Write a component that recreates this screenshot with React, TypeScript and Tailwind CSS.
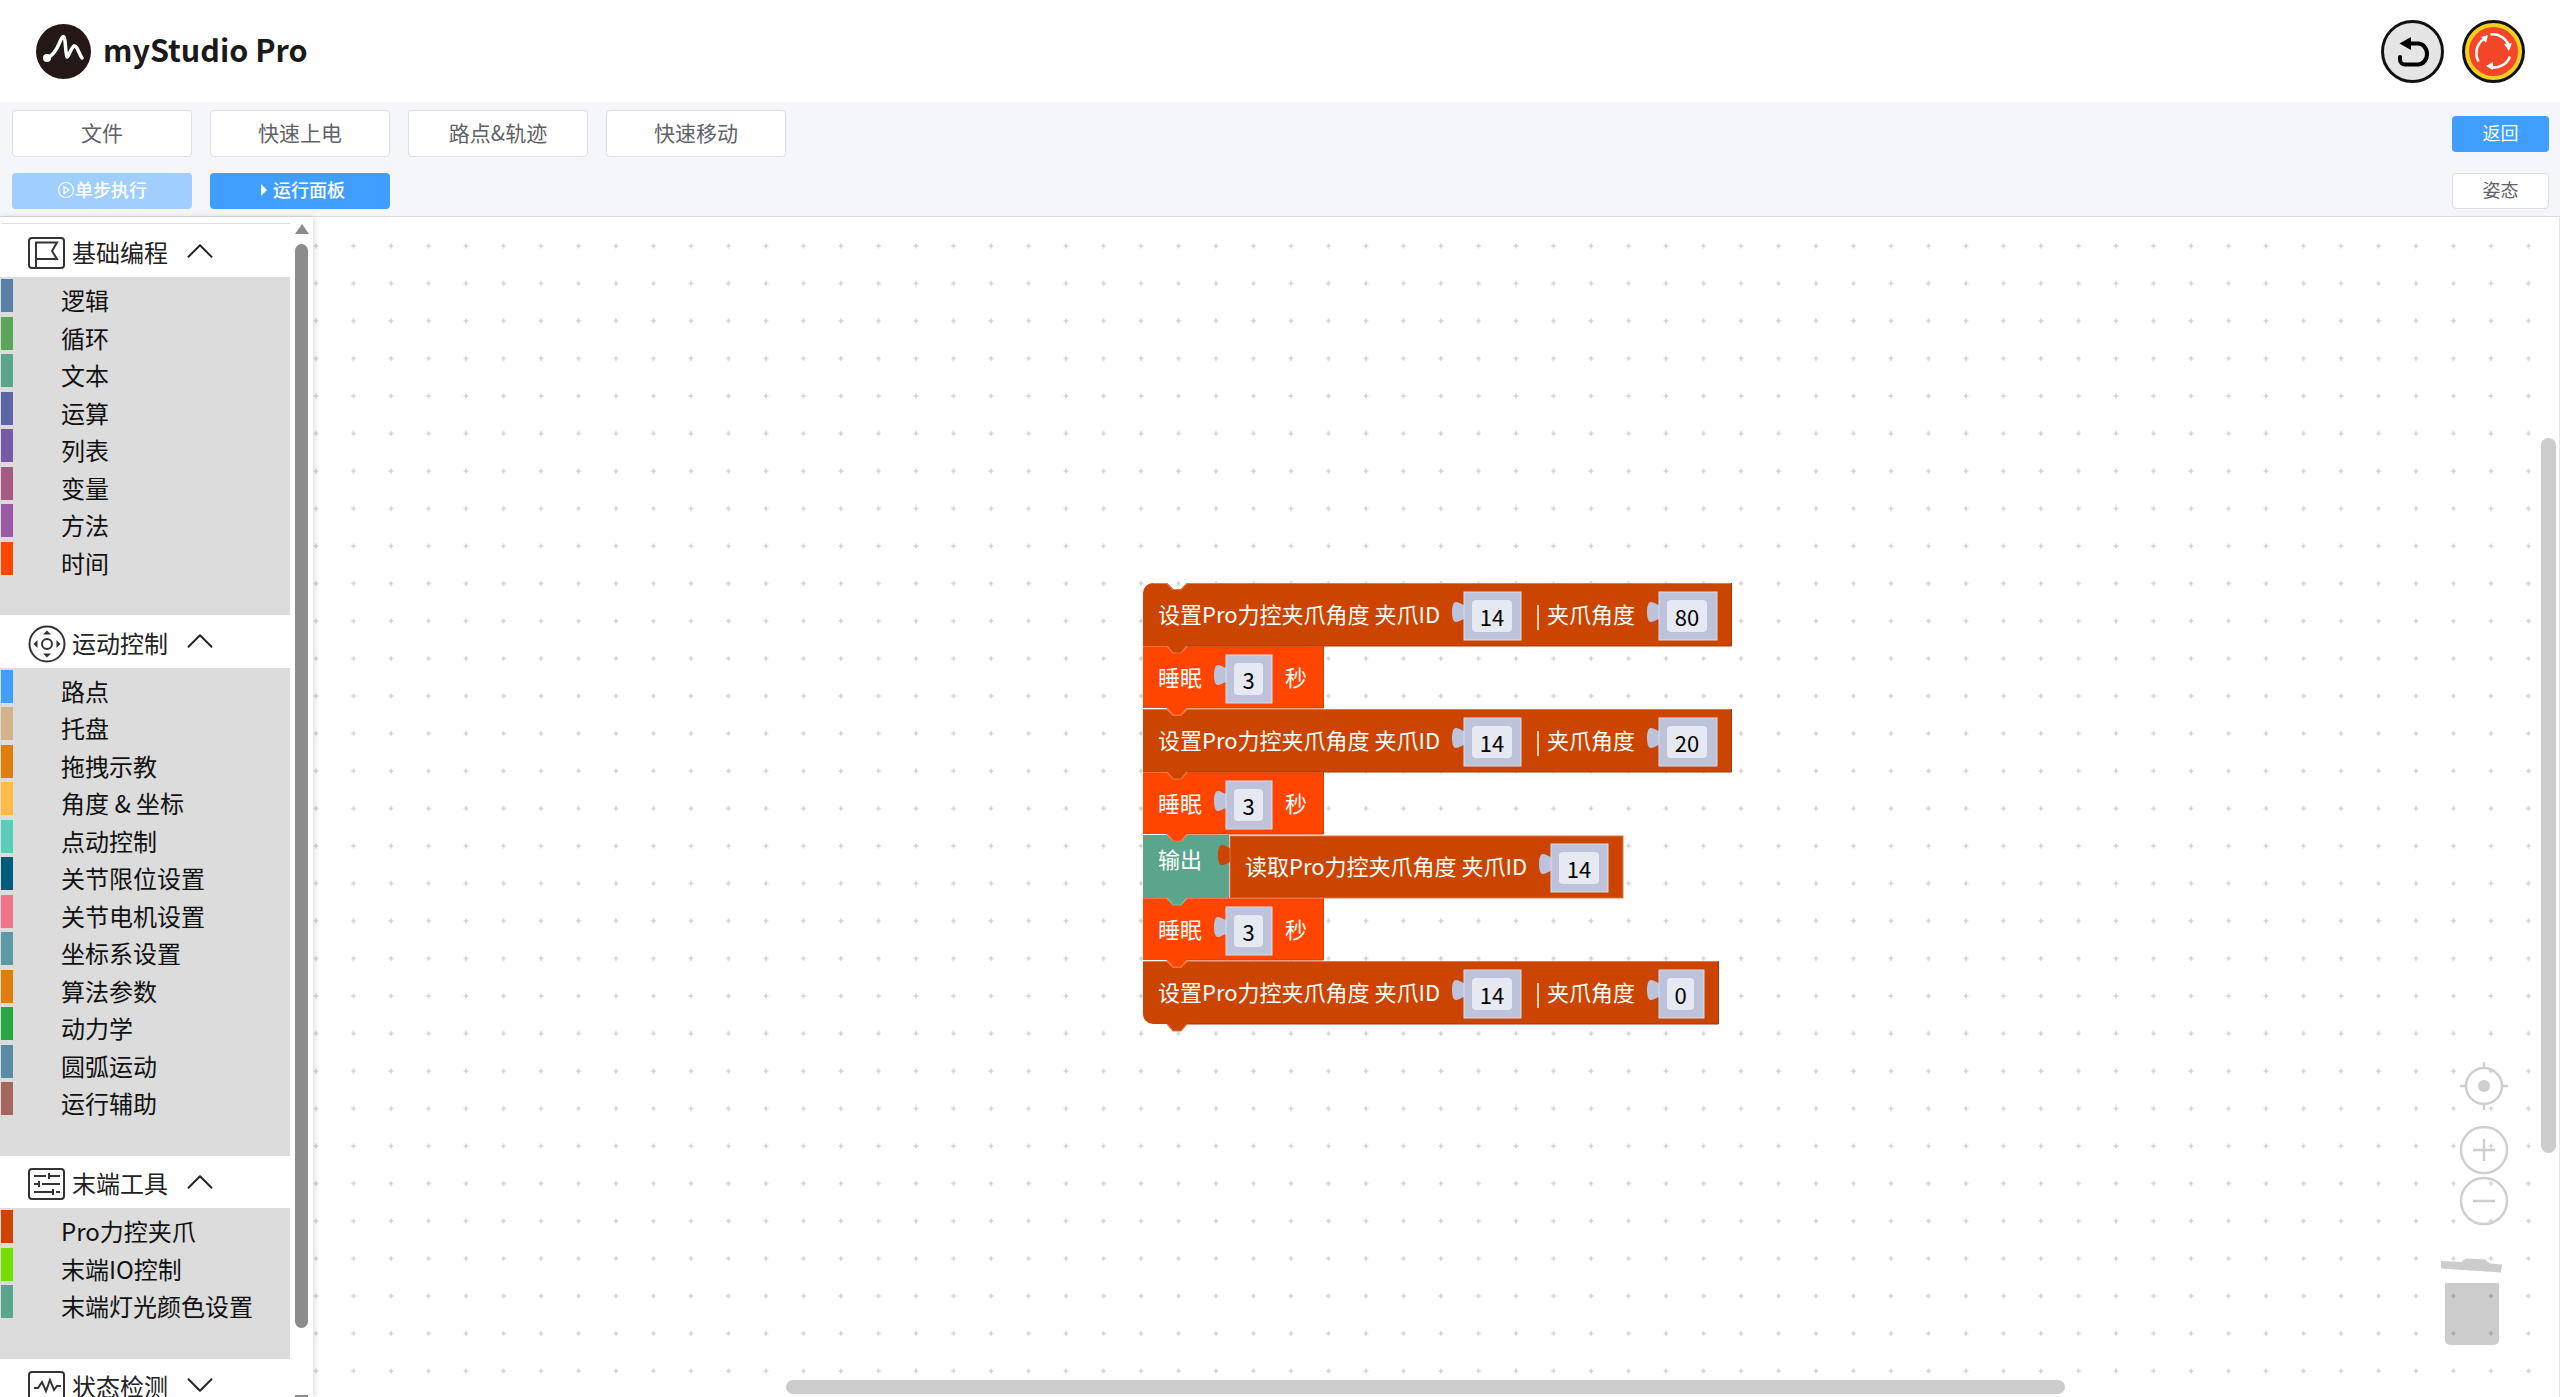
import React from 'react';
import { ChevronUp, ChevronDown } from 'lucide-react';

const cjk = 'font-["Noto_Sans_CJK_SC",sans-serif]';

type Item = { label: string; color: string };

const basic: Item[] = [
  { label: '逻辑', color: '#5b80a5' },
  { label: '循环', color: '#5ba55b' },
  { label: '文本', color: '#5ba58c' },
  { label: '运算', color: '#5b67a5' },
  { label: '列表', color: '#745ba5' },
  { label: '变量', color: '#a55b80' },
  { label: '方法', color: '#995ba5' },
  { label: '时间', color: '#ff4500' },
];

const motion: Item[] = [
  { label: '路点', color: '#409eff' },
  { label: '托盘', color: '#d2b48c' },
  { label: '拖拽示教', color: '#df7e0d' },
  { label: '角度 & 坐标', color: '#ffbb44' },
  { label: '点动控制', color: '#5ccbb8' },
  { label: '关节限位设置', color: '#005c78' },
  { label: '关节电机设置', color: '#f0758a' },
  { label: '坐标系设置', color: '#5b9aa5' },
  { label: '算法参数', color: '#df7e0d' },
  { label: '动力学', color: '#2aa745' },
  { label: '圆弧运动', color: '#5b8aa5' },
  { label: '运行辅助', color: '#a5675b' },
];

const tools: Item[] = [
  { label: 'Pro力控夹爪', color: '#cc4400' },
  { label: '末端IO控制', color: '#77dd00' },
  { label: '末端灯光颜色设置', color: '#5ba58c' },
];

const FlagIcon = () => (
  <svg width="37" height="32" viewBox="0 0 37 32" fill="none" stroke="#333" strokeWidth="2">
    <rect x="1" y="1" width="35" height="30" rx="3" />
    <path d="M8 31V5.500H29L24 14L29 22H8" />
  </svg>
);

const PadIcon = () => (
  <svg width="38" height="38" viewBox="0 0 38 38" fill="none" stroke="#333" strokeWidth="2">
    <circle cx="19" cy="19" r="17.500" />
    <circle cx="19" cy="19" r="5" />
    <path d="M15 9.500l4-4 4 4zM15 28.500l4 4 4-4zM9.500 15l-4 4 4 4zM28.500 15l4 4-4 4z" fill="#333" stroke="none" />
  </svg>
);

const SlidersIcon = () => (
  <svg width="37" height="32" viewBox="0 0 37 32" fill="none" stroke="#333" strokeWidth="2">
    <rect x="1" y="1" width="35" height="30" rx="3" />
    <path d="M6 8h12M22 8h10M21 5v6M6 16h4M14 16h18M11 13v6M6 24h18M28 24h4M25 21v6" />
  </svg>
);

const PulseIcon = () => (
  <svg width="37" height="32" viewBox="0 0 37 32" fill="none" stroke="#333" strokeWidth="2">
    <rect x="1" y="1" width="35" height="30" rx="3" />
    <path d="M6 17h4l4-6 4 9 4-11 4 10 3-4h4" />
  </svg>
);

const Category = ({ icon, title, items, open = true, first = false }: { icon: React.ReactNode; title: string; items?: Item[]; open?: boolean; first?: boolean }) => (
  <div>
    <div className={`ml-[2px] w-[288px] flex items-center bg-white pl-[26px] pt-[5px] ${first ? 'h-[53px]' : 'h-[52.5px]'}`}>
      <div className="w-[44px] flex items-center">{icon}</div>
      <span className="text-[24px] text-[#222] leading-none w-[105px] pb-[2px]">{title}</span>
      {open ? (
        <ChevronUp size={46} strokeWidth={1} className="shrink-0 text-[#222] -mt-[5px]" />
      ) : (
        <ChevronDown size={46} strokeWidth={1} className="shrink-0 text-[#222] -mt-[5px]" />
      )}
    </div>
    {items && (
      <div className="w-[290px] bg-[#dcdcdc] pb-[38px]">
        {items.map((item) => (
          <div key={item.label} className="h-[37.5px] flex items-center">
            <div className="w-[12px] h-[33px] ml-[1px]" style={{ backgroundColor: item.color }} />
            <span className="ml-[48px] pt-[9px] text-[24px] leading-none text-[#111]">{item.label}</span>
          </div>
        ))}
      </div>
    )}
  </div>
);

const Btn = ({ children, className = '' }: { children: React.ReactNode; className?: string }) => (
  <button className={`w-[180px] rounded-[4px] flex items-center justify-center ${className}`}>{children}</button>
);

// blockly-like block outline, page coords
const blockPath = (x: number, y: number, w: number, h: number, roundTop = false, roundBottom = false) => {
  const top = roundTop ? `M${x} ${y + 10}a10 10 0 0 1 10 -10` : `M${x} ${y}`;
  const bottom = roundBottom ? `H${x + 10}a10 10 0 0 1 -10 -10z` : `H${x}z`;
  return `${top}H${x + 24}l6 6h8l6 -6H${x + w}V${y + h}H${x + 44}l-6 7h-8l-6 -7${bottom}`;
};

const tabPath = (bx: number, ty: number) =>
  `M${bx + 1} ${ty + 3}c-4 0 -5 -3 -9 -3c-3 0 -4 5 -4 10c0 5 1 10 4 10c4 0 5 -3 9 -3z`;

const Input = ({ x, y, w, h, value, fw }: { x: number; y: number; w: number; h: number; value: string; fw: number }) => (
  <g>
    <path d={tabPath(x, y + 10)} fill="#bdc3db" />
    <rect x={x} y={y} width={w} height={h} fill="#bdc3db" stroke="#d9dcec" strokeWidth="1" />
    <rect x={x + 8} y={y + 8} width={fw} height={h - 16} rx="4" fill="#e6e9f2" />
    <text x={x + 8 + fw / 2} y={y + 34} textAnchor="middle" fontSize="22" fill="#000">{value}</text>
  </g>
);

const SetBlock = ({ y, second, w, secondW, round }: { y: number; second: string; w: number; secondW: number; round?: 'top' | 'bottom' }) => (
  <g>
    <path d={blockPath(1143, y, w, 63, round === 'top', round === 'bottom')} fill="#cb4500" />
    <path d={`M${1143 + (round === 'top' ? 10 : 0)} ${y + 0.5}H1167l6 6h8l6 -6H${1143 + w}`} stroke="#e0764a" strokeWidth="1.2" fill="none" />
    <path d={`M${1143 + w - 0.5} ${y}V${y + 63}H1187`} stroke="#a83900" strokeWidth="1" fill="none" />
    <path d={`M1167 ${y + 63}l6 7h8l6 -7`} stroke="#e0764a" strokeWidth="1.2" fill="none" />
    <text x="1158" y={y + 40} fontSize="22" fill="#fff">设置Pro力控夹爪角度 夹爪ID</text>
    <Input x={1464} y={y + 9} w={57} h={48} value="14" fw={40} />
    <path d={`M1538 ${y + 22}v25`} stroke="#fff" strokeWidth="1.5" />
    <text x="1547" y={y + 40} fontSize="22" fill="#fff">夹爪角度</text>
    <Input x={1659} y={y + 9} w={secondW} h={48} value={second} fw={secondW - 18} />
  </g>
);

const SleepBlock = ({ y }: { y: number }) => (
  <g>
    <path d={blockPath(1143, y, 181, 62)} fill="#ff4500" />
    <path d={`M1143 ${y + 0.5}H1167l6 6h8l6 -6H1324`} stroke="#ff7340" strokeWidth="1.2" fill="none" />
    <path d={`M1323.500 ${y}V${y + 62}H1187`} stroke="#d93b00" strokeWidth="1" fill="none" />
    <path d={`M1167 ${y + 62}l6 7h8l6 -7`} stroke="#ff7340" strokeWidth="1.2" fill="none" />
    <text x="1158" y={y + 40} fontSize="22" fill="#fff">睡眠</text>
    <Input x={1226} y={y + 9} w={46} h={48} value="3" fw={29} />
    <text x="1285" y={y + 40} fontSize="22" fill="#fff">秒</text>
  </g>
);

const BlockStack = () => (
  <svg width="2247" height="1180" className="absolute inset-0" fontFamily="'Noto Sans CJK SC',sans-serif">
    <g transform="translate(-313,-217)">
      <SetBlock y={961} second="0" w={576} secondW={45} round="bottom" />
      <SleepBlock y={898} />
      {/* output block, read value sits in the green one */}
      <path d={blockPath(1143, 835, 86, 63)} fill="#5ba58c" />
      <text x="1158" y="868" fontSize="22" fill="#fff">输出</text>
      <path d="M1167 898l6 7h8l6 -7" stroke="#7cb8a4" strokeWidth="1.2" fill="none" />
      <path d={tabPath(1230, 845)} fill="#cb4500" />
      <rect x="1230" y="836" width="393" height="62" fill="#cb4500" stroke="#e0764a" strokeWidth="1" />
      <text x="1245" y="875" fontSize="22" fill="#fff">读取Pro力控夹爪角度 夹爪ID</text>
      <Input x={1551} y={844} w={57} h={48} value="14" fw={40} />
      <SleepBlock y={772} />
      <SetBlock y={709} second="20" w={589} secondW={58} />
      <SleepBlock y={646} />
      <SetBlock y={583} second="80" w={589} secondW={58} round="top" />
    </g>
  </svg>
);

export default function App() {
  return (
    <div className={`h-screen flex flex-col overflow-hidden bg-white ${cjk}`}>
      {/* Header */}
      <header className="h-[102px] shrink-0 flex items-center justify-between pl-[36px] pr-[35px]">
        <div className="flex items-center gap-[12px]">
          <svg width="55" height="55" viewBox="0 0 55 55">
            <circle cx="27.500" cy="27.500" r="27.500" fill="#231815" />
            <path d="M11 34c5-2 9-7 12-14 2-5 4-9 5-7 2 4 1 14 3 20 2-1 4-9 7-11 3-1 5 8 8 12" fill="none" stroke="#fff" strokeWidth="3.500" strokeLinecap="round" strokeLinejoin="round" />
            <circle cx="11" cy="34" r="4" fill="#fff" />
          </svg>
          <span className="text-[30.5px] font-bold text-[#1a1a1a] leading-none -mt-[4px]">myStudio Pro</span>
        </div>
        <div className="flex items-center gap-[18px]">
          <div className="w-[63px] h-[63px] rounded-full bg-[#e5e5e5] border-[3px] border-[#111] flex items-center justify-center">
            <svg width="34" height="34" viewBox="0 0 34 34" fill="none">
              <path d="M14 9.500H22a9 10.500 0 0 1 0 21H9a5 5 0 0 1-5-5V23" stroke="#000" strokeWidth="4" strokeLinecap="round" />
              <path d="M15 3v13L3.500 9.500z" fill="#000" />
            </svg>
          </div>
          <div className="w-[63px] h-[63px] rounded-full bg-[#f2d020] border-[3px] border-[#111] flex items-center justify-center">
            <div className="w-[49px] h-[49px] rounded-full bg-[#f4472a] flex items-center justify-center">
              <svg width="38" height="38" viewBox="0 0 38 38" fill="none" stroke="#fff" strokeWidth="2.500">
                <path d="M3.500 29.500A17 17 0 0 1 9 7" />
                <path d="M15.500 2.500A17 17 0 0 1 33.500 13" />
                <path d="M35 24.500A17 17 0 0 1 15.500 35" />
                <path d="M13 3L6 5l5 6zM34 19l-5-7 8-1zM11 34l7-4v8z" fill="#fff" stroke="none" />
              </svg>
            </div>
          </div>
        </div>
      </header>

      {/* Toolbar */}
      <div className="h-[115px] shrink-0 bg-[#f4f6fa] px-[12px] pt-[8px] flex flex-col gap-[16px] border-b border-[#dcdcdc]">
        <div className="flex items-start justify-between">
          <div className="flex gap-[18px]">
            {['文件', '快速上电', '路点&轨迹', '快速移动'].map((t) => (
              <Btn key={t} className="h-[47px] pb-[2px] bg-white border border-[#dcdfe6] text-[21px] text-[#606266]">{t}</Btn>
            ))}
          </div>
          <button className="w-[97px] h-[36px] mt-[6px] pb-[3px] rounded-[4px] bg-[#409eff] text-white text-[18px] mr-[-1px]">返回</button>
        </div>
        <div className="flex items-start justify-between">
          <div className="flex gap-[18px]">
            <Btn className="h-[36px] pb-[3px] bg-[#a0cfff] text-white text-[18px] font-medium">
              <svg width="18" height="18" viewBox="0 0 18 18" fill="none" stroke="#fff" strokeWidth="1.200"><circle cx="9" cy="9" r="7.500" /><path d="M7 5.500l5 3.500-5 3.500z" /></svg>
              单步执行
            </Btn>
            <Btn className="h-[36px] pb-[3px] pl-[4px] bg-[#409eff] text-white text-[18px] font-medium">
              <svg width="10" height="14" viewBox="0 0 10 14" className="mr-[4px]"><path d="M2 1l6 6-6 6z" fill="#fff" /></svg>
              运行面板
            </Btn>
          </div>
          <button className="w-[97px] h-[36px] pb-[3px] rounded-[4px] bg-white border border-[#dcdfe6] text-[#606266] text-[18px] mr-[-1px]">姿态</button>
        </div>
      </div>

      {/* Main */}
      <div className="flex-1 flex min-h-0">
        <aside className="relative w-[313px] shrink-0 overflow-hidden bg-white pt-[7px] shadow-[2px_0_6px_rgba(0,0,0,0.12)] z-10">
          <div className="h-[1px] w-[288px] ml-[2px] bg-[#dcdcdc] -mt-[1px]" />
          <Category first icon={<FlagIcon />} title="基础编程" items={basic} />
          <Category icon={<PadIcon />} title="运动控制" items={motion} />
          <Category icon={<SlidersIcon />} title="末端工具" items={tools} />
          <Category icon={<PulseIcon />} title="状态检测" open={false} />
          {/* scrollbar */}
          <div className="absolute left-[295px] top-[7px] w-0 h-0 border-x-[7px] border-x-transparent border-b-[10px] border-b-[#8c8c8c]" />
          <div className="absolute left-[295px] top-[27px] w-[13px] h-[1084px] rounded-full bg-[#8c8c8c]" />
          <div className="absolute left-[295px] bottom-0 w-[13px] h-[2px] bg-[#8c8c8c]" />
        </aside>

        <main className="relative flex-1 overflow-hidden bg-white">
          <svg width="2247" height="1180" className="absolute inset-0">
            <defs>
              <pattern id="grid" x="-15.75" y="10.25" width="37.5" height="37.5" patternUnits="userSpaceOnUse">
                <path d="M16.250 18.750h5M18.750 16.250v5" stroke="#c8c8c8" strokeWidth="1.200" />
              </pattern>
            </defs>
            <rect width="2247" height="1180" fill="url(#grid)" />
          </svg>

          <BlockStack />

          {/* workspace controls */}
          <svg width="120" height="320" viewBox="0 0 120 320" className="absolute left-[2116px] top-[820px]" fill="none" stroke="#cfcfcf" strokeWidth="2.500">
            <g transform="translate(55,49)">
              <circle r="18" />
              <circle r="6" fill="#cfcfcf" stroke="none" />
              <path d="M0 -24v6M0 18v6M-24 0h6M18 0h6" />
            </g>
            <g transform="translate(55,113)">
              <circle r="23" />
              <path d="M-11 0h22M0 -11v22" />
            </g>
            <g transform="translate(55,164)">
              <circle r="23" />
              <path d="M-11 0h22" />
            </g>
            <path d="M12 224l20 1 5-3.500 19 1 5 4 12 1-1 8-60-4z" fill="#000" fillOpacity="0.2" stroke="none" />
            <path d="M16 246h54v57a5 5 0 0 1-5 5H21a5 5 0 0 1-5-5z" fill="#000" fillOpacity="0.2" stroke="none" />
          </svg>

          {/* workspace scrollbars */}
          <div className="absolute left-[2228px] top-[221px] w-[15px] h-[715px] rounded-full bg-[#cccccc]" />
          <div className="absolute left-[473px] top-[1163px] w-[1279px] h-[14px] rounded-full bg-[#cccccc]" />
          <div className="absolute right-0 top-0 bottom-0 w-px bg-[#e6e6e6]" />
        </main>
      </div>
    </div>
  );
}
